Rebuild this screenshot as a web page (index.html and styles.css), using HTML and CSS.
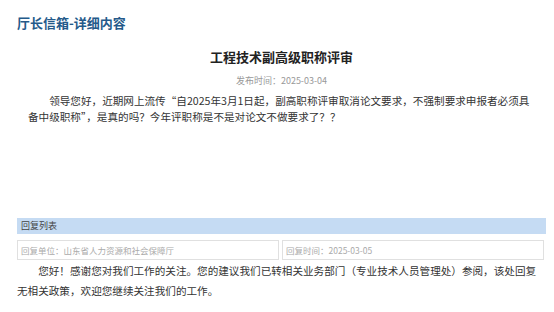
FILE: index.html
```html
<!DOCTYPE html>
<html lang="zh-CN">
<head>
    <meta charset="UTF-8">
    <meta name="viewport" content="width=device-width, initial-scale=1.0">
    <title>厅长信箱-详细内容</title>
    <link rel="stylesheet" href="styles.css">
</head>
<body>
    <div class="page">
        <h2 class="page-title">厅长信箱-详细内容</h2>

        <div class="letter">
            <h1 class="letter-title">工程技术副高级职称评审</h1>
            <div class="letter-date">发布时间：2025-03-04</div>
            <div class="letter-body">
                <p>领导您好，近期网上流传“自2025年3月1日起，副高职称评审取消论文要求，不强制要求申报者必须具备中级职称”，是真的吗？今年评职称是不是对论文不做要求了？？</p>
            </div>
        </div>

        <div class="reply">
            <div class="reply-head">回复列表</div>
            <div class="reply-meta">
                <div class="meta-box">回复单位：山东省人力资源和社会保障厅</div>
                <div class="meta-box">回复时间：2025-03-05</div>
            </div>
            <div class="reply-body">
                <p>您好！感谢您对我们工作的关注。您的建议我们已转相关业务部门（专业技术人员管理处）参阅，该处回复无相关政策，欢迎您继续关注我们的工作。</p>
            </div>
        </div>
    </div>
</body>
</html>
```

FILE: styles.css
```css
body {
    font-family: "Noto Sans CJK SC", "Noto Sans", sans-serif;
    background-color: #fff;
    color: #333;
    margin: 0;
    padding: 0;
}
.page {
    padding: 13px 8px 0 17px;
}
.page-title {
    margin: 0;
    font-size: 13px;
    line-height: 20px;
    font-weight: bold;
    color: #245a8a;
}
.letter-title {
    margin: 14px 0 0;
    text-align: center;
    font-size: 13px;
    line-height: 20px;
    font-weight: bold;
    color: #222;
}
.letter-date {
    margin-top: 7px;
    text-align: center;
    font-size: 9px;
    line-height: 14px;
    color: #999;
}
.letter-body {
    margin-top: 4.5px;
    padding: 0 10px 0 11px;
    min-height: 125.5px;
}
.letter-body p,
.reply-body p {
    margin: 0;
    font-size: 10.6px;
    text-indent: 2em;
}
.letter-body p {
    line-height: 16px;
}
.reply-head {
    height: 16px;
    line-height: 16px;
    padding-left: 4px;
    font-size: 9px;
    color: #444;
    background-color: #c5dbf3;
}
.reply-meta {
    display: flex;
    gap: 3px;
    margin-top: 6px;
    padding-right: 2px;
}
.meta-box {
    flex: 1;
    height: 18px;
    line-height: 18px;
    padding-left: 3px;
    border: 1px solid #e0e0e0;
    font-size: 8.5px;
    color: #aaa;
}
.reply-body {
    margin-top: 1px;
    padding-right: 7px;
}
.reply-body p {
    line-height: 19.5px;
}
```
